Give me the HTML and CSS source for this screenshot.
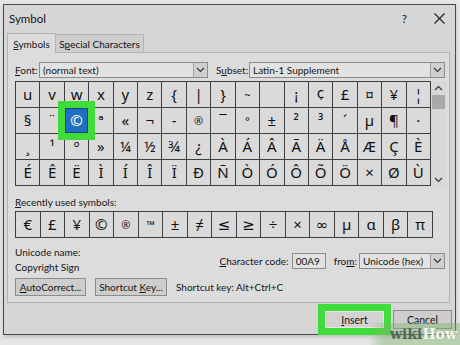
FILE: index.html
```html
<!DOCTYPE html>
<html lang="en">

<head>
    <meta charset="UTF-8">
    <title>Symbol</title>
    <link rel="stylesheet" href="styles.css">
</head>

<body>
    <div class="dialog">
        <div class="titlebar">
            <span class="title">Symbol</span>
            <span class="help">?</span>
            <span class="close">
                <svg width="11" height="11" viewBox="0 0 11 11"><path d="M0.5 0.5 L10.5 10.5 M10.5 0.5 L0.5 10.5" stroke="#222" stroke-width="1.2" fill="none"/></svg>
            </span>
        </div>

        <div class="tabs">
            <div class="tab active"><span><u>S</u>ymbols</span></div>
            <div class="tab"><span>S<u>p</u>ecial Characters</span></div>
        </div>

        <div class="panel">
            <!-- font / subset -->
            <div class="font-row">
                <span class="lbl font-lbl"><u>F</u>ont:</span>
                <div class="select font-select">
                    <span class="select-text">(normal text)</span>
                    <span class="arrow"><svg width="9" height="6" viewBox="0 0 9 6"><polyline points="1,1 4.5,4.5 8,1" stroke="#333" stroke-width="1.1" fill="none"/></svg></span>
                </div>
                <span class="lbl subset-lbl">S<u>u</u>bset:</span>
                <div class="select subset-select">
                    <span class="select-text">Latin-1 Supplement</span>
                    <span class="arrow"><svg width="9" height="6" viewBox="0 0 9 6"><polyline points="1,1 4.5,4.5 8,1" stroke="#333" stroke-width="1.1" fill="none"/></svg></span>
                </div>
            </div>

            <!-- character map -->
            <div class="charmap">
                <div class="grid">
                    <div class="cell">u</div><div class="cell">v</div><div class="cell">w</div><div class="cell">x</div><div class="cell">y</div><div class="cell">z</div><div class="cell">{</div><div class="cell">|</div><div class="cell">}</div><div class="cell small">~</div><div class="cell"></div><div class="cell">¡</div><div class="cell">¢</div><div class="cell">£</div><div class="cell">¤</div><div class="cell">¥</div><div class="cell">¦</div>
                    <div class="cell">§</div><div class="cell">¨</div><div class="cell selected">©</div><div class="cell">ª</div><div class="cell">«</div><div class="cell">¬</div><div class="cell">-</div><div class="cell small">®</div><div class="cell">¯</div><div class="cell small">°</div><div class="cell">±</div><div class="cell">²</div><div class="cell">³</div><div class="cell">´</div><div class="cell">µ</div><div class="cell">¶</div><div class="cell">·</div>
                    <div class="cell">¸</div><div class="cell">¹</div><div class="cell">º</div><div class="cell">»</div><div class="cell">¼</div><div class="cell">½</div><div class="cell">¾</div><div class="cell">¿</div><div class="cell">À</div><div class="cell">Á</div><div class="cell">Â</div><div class="cell">Ã</div><div class="cell">Ä</div><div class="cell">Å</div><div class="cell">Æ</div><div class="cell">Ç</div><div class="cell">È</div>
                    <div class="cell">É</div><div class="cell">Ê</div><div class="cell">Ë</div><div class="cell">Ì</div><div class="cell">Í</div><div class="cell">Î</div><div class="cell">Ï</div><div class="cell">Ð</div><div class="cell">Ñ</div><div class="cell">Ò</div><div class="cell">Ó</div><div class="cell">Ô</div><div class="cell">Õ</div><div class="cell">Ö</div><div class="cell">×</div><div class="cell">Ø</div><div class="cell">Ù</div>
                </div>
                <div class="scrollbar">
                    <svg width="9" height="6" viewBox="0 0 9 6"><polyline points="1,5 4.5,1.5 8,5" stroke="#333" stroke-width="1.1" fill="none"/></svg>
                    <div class="thumb"></div>
                    <div class="track"></div>
                    <svg width="9" height="6" viewBox="0 0 9 6"><polyline points="1,1 4.5,4.5 8,1" stroke="#333" stroke-width="1.1" fill="none"/></svg>
                </div>
            </div>

            <div class="section-lbl"><u>R</u>ecently used symbols:</div>
            <div class="recent">
                <div class="cell">€</div><div class="cell">£</div><div class="cell">¥</div><div class="cell">©</div><div class="cell small">®</div><div class="cell small">™</div><div class="cell">±</div><div class="cell">≠</div><div class="cell">≤</div><div class="cell">≥</div><div class="cell">÷</div><div class="cell">×</div><div class="cell">∞</div><div class="cell">µ</div><div class="cell">α</div><div class="cell">β</div><div class="cell">π</div>
            </div>

            <div class="info-row">
                <div class="names">
                    <div>Unicode name:</div>
                    <div>Copyright Sign</div>
                </div>
                <div class="code-group">
                    <span class="lbl"><u>C</u>haracter code:</span>
                    <div class="textbox">00A9</div>
                    <span class="lbl from-lbl">fro<u>m</u>:</span>
                    <div class="select from-select">
                        <span class="select-text">Unicode (hex)</span>
                        <span class="arrow"><svg width="9" height="6" viewBox="0 0 9 6"><polyline points="1,1 4.5,4.5 8,1" stroke="#333" stroke-width="1.1" fill="none"/></svg></span>
                    </div>
                </div>
            </div>

            <div class="btn-row">
                <div class="btn autocorrect"><span><u>A</u>utoCorrect...</span></div>
                <div class="btn shortcut"><span>Shortcut <u>K</u>ey...</span></div>
                <span class="shortcut-text">Shortcut key: Alt+Ctrl+C</span>
            </div>
        </div>

        <div class="footer">
            <div class="btn insert"><span><u>I</u>nsert</span></div>
            <div class="btn cancel"><span>Cancel</span></div>
        </div>
    </div>

    <div class="watermark"><span class="wiki">wiki</span><span class="how">How</span></div>
</body>

</html>
```

FILE: styles.css
```css
body {
  margin: 0;
  padding: 4px 0 0 3px;
  width: 460px;
  height: 345px;
  box-sizing: border-box;
  background: #e6e6e6;
  font-family: Lato, "Open Sans", sans-serif;
  font-size: 10px;
  color: #151515;
  overflow: hidden;
  position: relative;
}

u {
  text-decoration-thickness: 1px;
  text-underline-offset: 1px;
}

.dialog {
  width: 453px;
  height: 331px;
  box-sizing: border-box;
  border: 1px solid #4a4a4a;
  background: #d6d6d6;
  box-shadow: 0 2px 4px rgba(0, 0, 0, 0.18);
  display: flex;
  flex-direction: column;
}

/* title bar */
.titlebar {
  height: 27px;
  display: flex;
  align-items: center;
  padding-left: 5px;
  flex-shrink: 0;
}

.title {
  font-size: 11.5px;
  flex: 1;
}

.help {
  font-size: 11.5px;
  margin-right: 27px;
}

.close {
  display: flex;
  margin-right: 10px;
}

/* tabs */
.tabs {
  height: 20px;
  display: flex;
  margin-left: 3px;
  flex-shrink: 0;
}

.tab {
  display: flex;
  align-items: center;
  justify-content: center;
  white-space: nowrap;
  border: 1px solid #b4b4b4;
  border-bottom: none;
  background: #cecece;
  font-size: 10px;
  margin-top: 2px;
  box-sizing: border-box;
}

.tab.active {
  background: #dcdcdc;
  margin-top: 0;
  width: 49px;
  position: relative;
  top: 1px;
  z-index: 1;
}

.tab + .tab {
  border-left: none;
  width: 88px;
}

/* main panel */
.panel {
  width: 443px;
  height: 251px;
  box-sizing: border-box;
  margin-left: 3px;
  border: 1px solid #b4b4b4;
  background: #dcdcdc;
  padding: 9px 3px 0 7px;
  display: flex;
  flex-direction: column;
  flex-shrink: 0;
}

.font-row {
  display: flex;
  align-items: center;
  height: 16px;
}

.font-lbl {
  width: 24px;
}

.subset-lbl {
  margin-left: 8px;
  width: 33px;
}

.select {
  height: 16px;
  box-sizing: border-box;
  border: 1px solid #8c8c8c;
  background: #e2e2e2;
  display: flex;
  align-items: center;
}

.select-text {
  flex: 1;
  padding-left: 3px;
  white-space: nowrap;
}

.arrow {
  width: 13px;
  height: 14px;
  border-left: 1px solid #a0a0a0;
  background: #cfcfcf;
  display: flex;
  align-items: center;
  justify-content: center;
}

.font-select {
  width: 169px;
}

.subset-select {
  width: 196px;
}

/* character grid */
.charmap {
  display: flex;
  margin-top: 3px;
  height: 105px;
}

.grid {
  width: 416px;
  display: grid;
  grid-template-columns: repeat(17, 1fr);
  grid-template-rows: repeat(4, 1fr);
  gap: 1px;
  background: #3e3e3e;
  border: 1px solid #3e3e3e;
  box-sizing: border-box;
}

.cell {
  background: #dadada;
  display: flex;
  align-items: center;
  justify-content: center;
  font-family: "Noto Sans", "DejaVu Sans", sans-serif;
  font-size: 15px;
  color: #111;
  line-height: 1;
}

.cell.small {
  font-size: 11px;
}

.cell.selected {
  background: #1f6fc2;
  color: #fff;
  position: relative;
  z-index: 2;
  outline: 7px solid #3fdc3a;
  box-shadow: inset 0 0 0 1px #15437a;
}

.scrollbar {
  width: 15px;
  background: #d8d8d8;
  display: flex;
  flex-direction: column;
  align-items: center;
  padding: 4px 0 3px;
  box-sizing: border-box;
}

.thumb {
  width: 13px;
  height: 14px;
  margin-top: 4px;
  background: #a9a9a9;
}

.track {
  flex: 1;
}

/* recently used */
.section-lbl {
  margin-top: 10px;
  line-height: 13px;
}

.recent {
  margin-top: 2px;
  width: 418px;
  height: 27px;
  box-sizing: border-box;
  display: grid;
  grid-template-columns: repeat(17, 1fr);
  gap: 1px;
  background: #3e3e3e;
  border: 1px solid #3e3e3e;
}

/* info row */
.info-row {
  margin-top: 7px;
  height: 30px;
  display: flex;
  align-items: center;
}

.names {
  line-height: 15px;
}

.code-group {
  margin-left: auto;
  margin-right: 1px;
  margin-top: 2px;
  display: flex;
  align-items: center;
}

.textbox {
  width: 34px;
  height: 16px;
  box-sizing: border-box;
  border: 1px solid #8c8c8c;
  background: #e2e2e2;
  margin-left: 3px;
  padding-left: 3px;
  line-height: 14px;
}

.from-lbl {
  margin-left: 8px;
  margin-right: 2px;
}

.from-select {
  width: 86px;
}

/* buttons */
.btn-row {
  margin-top: 3px;
  display: flex;
  align-items: center;
  gap: 9px;
}

.btn {
  height: 18px;
  box-sizing: border-box;
  border: 1px solid #8c8c8c;
  background: #cdcdcd;
  display: flex;
  align-items: center;
  justify-content: center;
  white-space: nowrap;
}

.autocorrect {
  width: 71px;
}

.shortcut {
  width: 72px;
}

.footer {
  display: flex;
  justify-content: flex-end;
  gap: 8px;
  padding: 7px 3px 0 0;
}

.footer .btn {
  height: 19px;
  font-size: 10.5px;
}

.insert {
  width: 61px;
  border: 1px solid #2f5f8f;
  background: #d2d2d2;
  box-shadow: inset 0 0 0 1px #e6e6e6;
  outline: 7px solid #3fdc3a;
  outline-offset: -1px;
}

.cancel {
  width: 59px;
}

.watermark {
  position: absolute;
  right: 0;
  bottom: 0;
  width: 90px;
  height: 22px;
  background: linear-gradient(100deg, rgba(130, 180, 110, 0) 0%, rgba(130, 180, 110, 0.45) 18%, rgba(130, 180, 110, 0.45) 100%);
  display: flex;
  align-items: center;
  justify-content: flex-end;
  padding-right: 3px;
  box-sizing: border-box;
  font-family: "DejaVu Serif", serif;
  font-weight: bold;
  font-size: 14px;
}

.wiki {
  color: #56655a;
}

.how {
  color: #f4f6f2;
}
```
